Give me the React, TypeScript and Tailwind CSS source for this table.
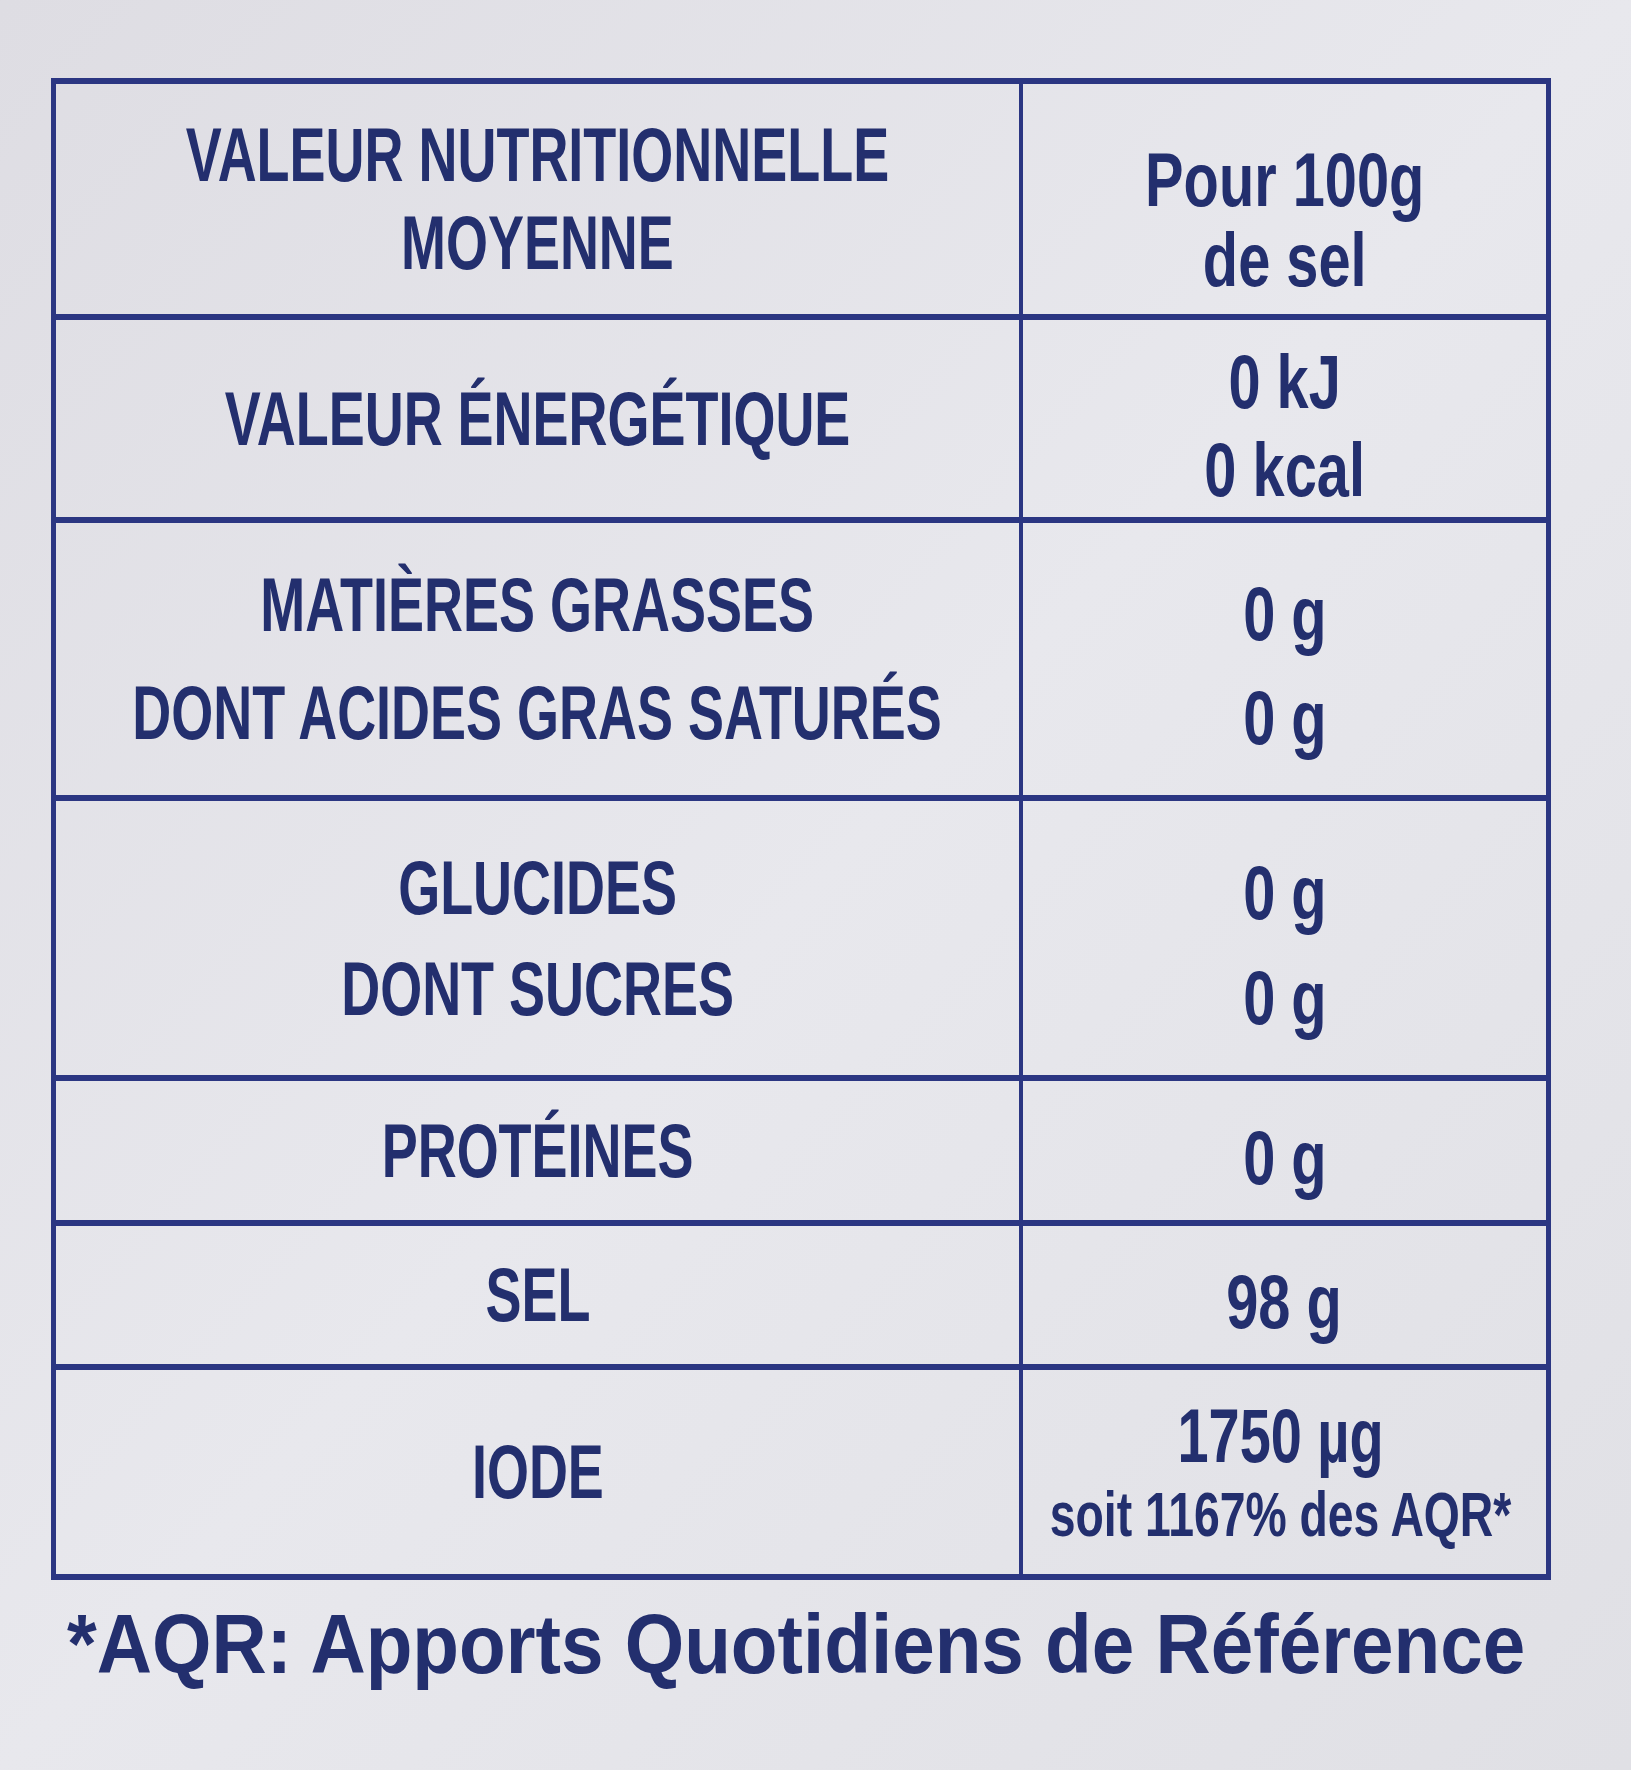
import React from "react";

type Row = {
  h: string;
  left: string[];
  right: string[];
  leftLead?: string;
  rightLead?: string;
  rightPad?: string;
  small?: boolean;
};

const rows: Row[] = [
  { h: "h-[236px]", left: ["VALEUR NUTRITIONNELLE", "MOYENNE"], right: ["Pour 100g", "de sel"], leftLead: "leading-[88px]", rightLead: "leading-[80px]", rightPad: "pt-[42px]" },
  { h: "h-[203px]", left: ["VALEUR ÉNERGÉTIQUE"], right: ["0 kJ", "0 kcal"], rightLead: "leading-[88px]" },
  { h: "h-[278px]", left: ["MATIÈRES GRASSES", "DONT ACIDES GRAS SATURÉS"], right: ["0 g", "0 g"], leftLead: "leading-[108px]", rightLead: "leading-[104px]" },
  { h: "h-[280px]", left: ["GLUCIDES", "DONT SUCRES"], right: ["0 g", "0 g"], leftLead: "leading-[101px]", rightLead: "leading-[105px]" },
  { h: "h-[145px]", left: ["PROTÉINES"], right: ["0 g"] },
  { h: "h-[144px]", left: ["SEL"], right: ["98 g"] },
  { h: "h-[204px]", left: ["IODE"], right: ["1750 µg"], small: true },
];

export default function App() {
  return (
    <div className="min-h-screen w-full bg-gradient-to-br from-[#dedde3] via-[#e8e8ed] to-[#e0e0e5] text-[#232f6e] font-['Liberation_Sans',Arial,sans-serif] font-bold">
      <div className="pt-[78px] pl-[51px]">
        {/* Tableau nutritionnel */}
        <div className="w-[1500px] border-x-[5px] border-y-[6px] border-[#2b3682]">
          {rows.map((r, i) => (
            <div
              key={i}
              className={`flex ${r.h} ${i < rows.length - 1 ? "border-b-[6px] border-[#2b3682]" : ""}`}
            >
              <div className="w-[967px] shrink-0 border-r-[4px] border-[#2b3682] flex items-center justify-center">
                <div className={`shrink-0 text-center text-[76px] [transform:scaleX(0.71)] ${r.leftLead ?? "leading-none"}`}>
                  {r.left.map((t) => (
                    <div key={t} className="whitespace-nowrap">{t}</div>
                  ))}
                </div>
              </div>
              <div className="flex-1 min-w-0 flex items-center justify-center">
                {r.small ? (
                  <div className="shrink-0 text-center [transform:scaleX(0.735)] pr-[12px]">
                    <div className="text-[76px] leading-[84px] whitespace-nowrap">1750 µg</div>
                    <div className="text-[63px] leading-[72px] whitespace-nowrap">soit 1167% des AQR*</div>
                  </div>
                ) : (
                  <div className={`shrink-0 text-center text-[76px] [transform:scaleX(0.76)] ${r.rightLead ?? "leading-none"} ${r.rightPad ?? "pt-[14px]"}`}>
                    {r.right.map((t, j) => (
                      <div key={j} className="whitespace-nowrap">{t}</div>
                    ))}
                  </div>
                )}
              </div>
            </div>
          ))}
        </div>

        {/* Note de bas de tableau */}
        <div className="mt-[22px] ml-[16px] origin-left [transform:scaleX(0.91)] text-[84px] leading-none whitespace-nowrap">
          *AQR: Apports Quotidiens de Référence
        </div>
      </div>
    </div>
  );
}
